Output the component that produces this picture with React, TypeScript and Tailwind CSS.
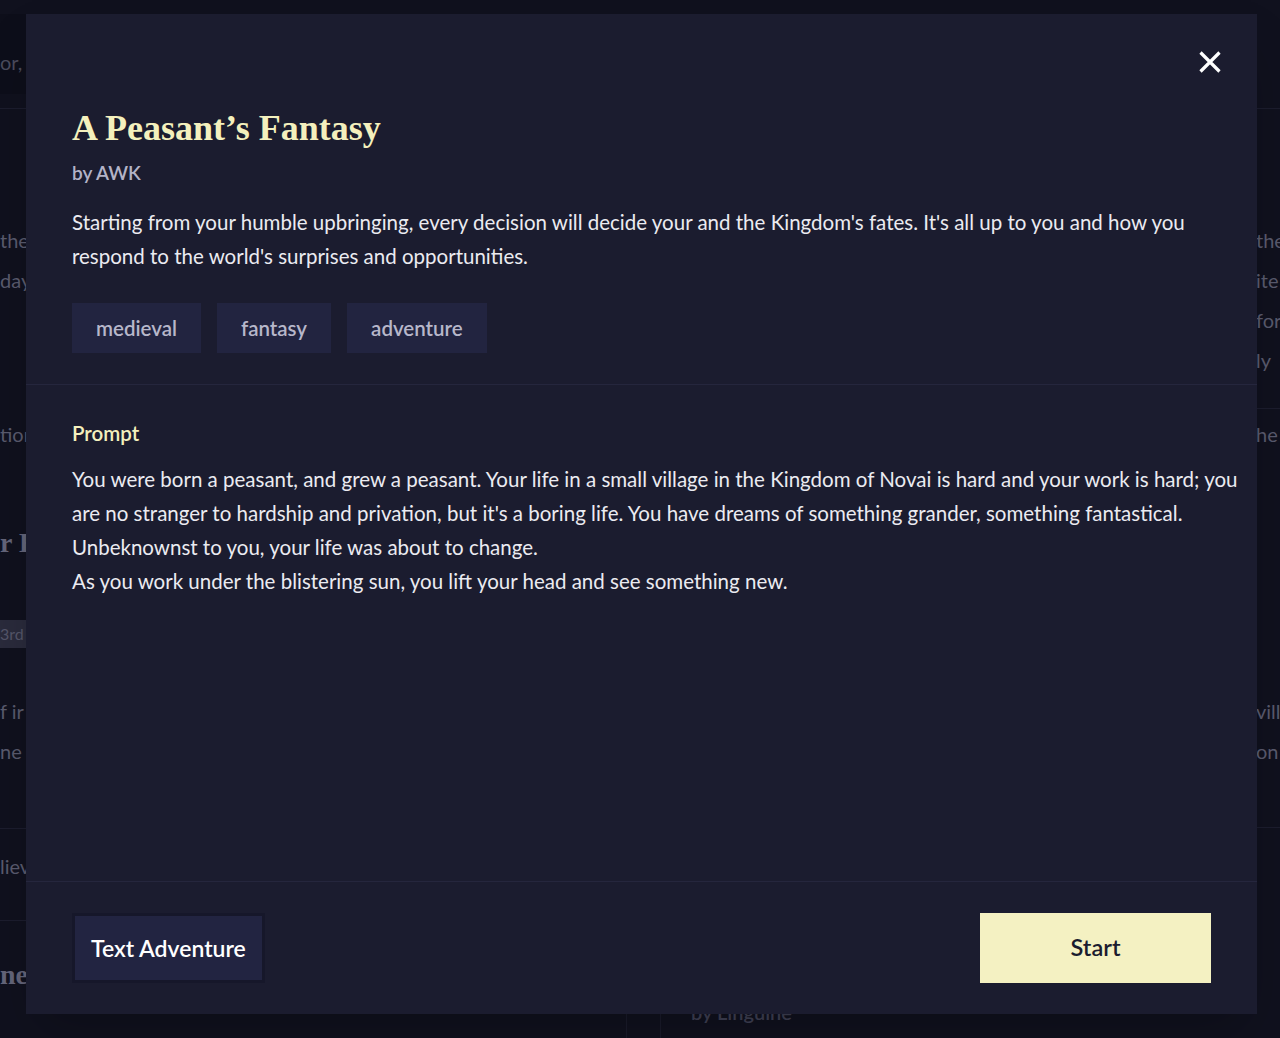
const tags = ["medieval", "fantasy", "adventure"];

function BackgroundPage() {
  return (
    <div className="flex h-full w-full text-[20px] leading-[40px] text-[#5a5b6e]">
      {/* left column, only its right edge peeks out from behind the modal */}
      <div className="flex w-[26px] shrink-0 flex-col overflow-hidden whitespace-nowrap">
        <div className="h-[14px]" />
        <div className="flex h-[80px] items-center bg-[#0d0e1a] pt-[16px] text-[#4a4b5c]">or, t</div>
        <div className="h-[14px]" />
        <div className="border-t border-[#1c1d2e]" />
        <div className="h-[111px]" />
        <p>the</p>
        <p>day</p>
        <div className="h-[114px]" />
        <p>tion</p>
        <div className="h-[69px]" />
        <p className="font-['Liberation_Serif',serif] text-[28px] font-bold text-[#64657a]">r E</p>
        <div className="h-[57px]" />
        <div className="flex">
          <span className="h-[28px] bg-[#2a2b3c] pr-3 text-[16px] leading-[28px] text-[#55566a]">3rd</span>
        </div>
        <div className="h-[43px]" />
        <p>f ir</p>
        <p>ne c</p>
        <div className="h-[57px]" />
        <div className="border-t border-[#1c1d2e]" />
        <div className="h-[17px]" />
        <p>liev</p>
        <div className="h-[34px]" />
        <div className="border-t border-[#1c1d2e]" />
        <div className="h-[34px]" />
        <p className="font-['Liberation_Serif',serif] text-[28px] font-bold text-[#64657a]">nea</p>
      </div>

      {/* middle column, only its bottom edge peeks out */}
      <div className="flex w-[1230px] shrink-0 flex-col">
        <div className="h-[994px]" />
        <div className="ml-[600px] flex h-[44px] border-l border-[#1a1b2b]">
          <div className="w-[34px] border-r border-[#1a1b2b]" />
          <p className="pl-[30px] font-semibold leading-[36px] text-[#3f4054]">by Linguine</p>
        </div>
      </div>

      {/* right column */}
      <div className="flex flex-1 flex-col overflow-hidden whitespace-nowrap">
        <div className="h-[108px]" />
        <div className="border-t border-[#1c1d2e]" />
        <div className="h-[111px]" />
        <p>the</p>
        <p>ite</p>
        <p>for</p>
        <p>ly</p>
        <div className="h-[28px]" />
        <div className="border-t border-[#1c1d2e]" />
        <div className="h-[5px]" />
        <p>he</p>
        <div className="h-[237px]" />
        <p>vill</p>
        <p>on</p>
        <div className="h-[56px]" />
        <div className="border-t border-[#1c1d2e]" />
      </div>
    </div>
  );
}

export default function App() {
  return (
    <div className="relative h-[1038px] w-full overflow-hidden bg-[#10111e] font-['Lato','Noto_Sans',sans-serif]">
      <BackgroundPage />

      <div className="absolute left-[26px] top-[14px] flex h-[1000px] w-[1231px] flex-col bg-[#1b1c2f] shadow-2xl">
        <button className="absolute right-[35px] top-[36px] text-white" aria-label="Close">
          <svg width="24" height="24" viewBox="0 0 24 24" fill="none" stroke="currentColor" strokeWidth="3.2">
            <path d="M2.5 2.5 21.5 21.5M21.5 2.5 2.5 21.5" />
          </svg>
        </button>

        <div className="border-b border-[#25263d] pb-[31px] pl-[46px] pr-[20px] pt-[94px]">
          <h1 className="font-['Liberation_Serif',serif] text-[36px] font-bold leading-[40px] text-[#f4f0bd]">
            A Peasant’s Fantasy
          </h1>
          <p className="mt-[11px] text-[19px] font-semibold leading-[28px] text-[#b3b3c7]">by AWK</p>
          <p className="mt-[18px] text-[20.5px] leading-[34px] text-[#ebebf1]">
            Starting from your humble upbringing, every decision will decide your and the Kingdom's fates. It's all up to
            you and how you respond to the world's surprises and opportunities.
          </p>
          <div className="mt-[30px] flex gap-4">
            {tags.map(tag => (
              <span
                key={tag}
                className="flex h-[50px] items-center bg-[#222440] px-6 text-[20.5px] font-semibold text-[#b7b7ca]"
              >
                {tag}
              </span>
            ))}
          </div>
        </div>

        <div className="flex-1 pl-[46px] pr-[10px] pt-[33px]">
          <h2 className="text-[20.5px] font-semibold leading-[30px] text-[#f4f0bd]">Prompt</h2>
          <p className="mt-[14px] text-[20.5px] leading-[34px] text-[#ebebf1]">
            You were born a peasant, and grew a peasant. Your life in a small village in the Kingdom of Novai is hard and
            your work is hard; you are no stranger to hardship and privation, but it's a boring life. You have dreams of
            something grander, something fantastical. Unbeknownst to you, your life was about to change.
          </p>
          <p className="text-[20.5px] leading-[34px] text-[#ebebf1]">
            As you work under the blistering sun, you lift your head and see something new.
          </p>
        </div>

        <div className="flex items-center justify-between border-t border-[#25263d] px-[46px] pb-[31px] pt-[31px]">
          <button className="h-[70px] border-[3px] border-[#16172a] bg-[#222441] px-[16px] text-[23px] font-semibold text-white">
            Text Adventure
          </button>
          <button className="h-[70px] w-[231px] bg-[#f4f1c2] text-[23.5px] font-semibold text-[#1b1c2f]">Start</button>
        </div>
      </div>
    </div>
  );
}
